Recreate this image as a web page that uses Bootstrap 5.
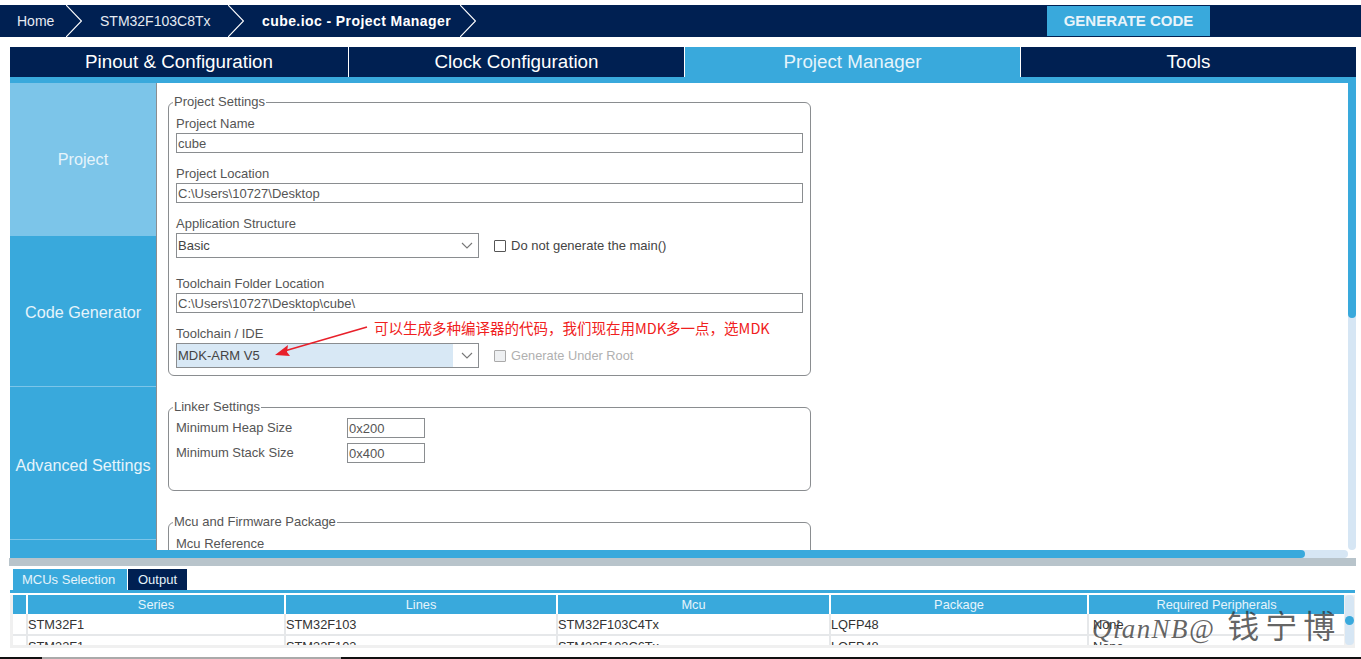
<!DOCTYPE html>
<html lang="zh-CN">
<head>
  <meta charset="UTF-8" />
  <title>cube.ioc - Project Manager</title>
  <link rel="stylesheet" href="https://cdn.jsdelivr.net/npm/bootstrap@5.3.0/dist/css/bootstrap.min.css" />
  <style>
    html, body { height: 659px; overflow: hidden; }
    body {
      background: #fff;
      color: #444;
      font-family: "Liberation Sans", Arial, sans-serif;
      font-size: 13px;
      position: relative;
    }
    /* top bar */
    .crumbbar { margin-top: 5px; height: 32px; background: #002052; color: #fff; }
    .crumb { font-size: 14px; height: 32px; line-height: 32px; color: #e6ebf2; }
    .crumb-home { width: 66px; padding-left: 17px; }
    .crumb-mcu { width: 146px; padding-left: 18px; }
    .crumb-cur { padding-left: 18px; width: 216px; font-weight: 700; color: #fff; letter-spacing: .42px; white-space: nowrap; }
    .crumbbar svg { flex: none; }
    .gen-btn {
      margin: 1px 0 0 571px; width: 163px; height: 30px; padding: 0; border: 0; border-radius: 0;
      background: #39a9dc; color: #e9f4fa; font-size: 15px; font-weight: 700; line-height: 30px;
    }
    .gen-btn:hover { background: #39a9dc; color: #e9f4fa; }
    /* main tabs */
    .maintabs { margin: 10px 5px 0 10px; height: 30px; background: #002052; }
    .maintab { color: #fff; font-size: 18.8px; line-height: 30px; text-align: center; border-left: 1px solid #fff; width: 336px; }
    .maintab:first-child { border-left: 0; width: 338px; }
    .maintab.sel { background: #39a9dc; color: #e6f4fb; }
    .tabstrip { margin: 0 5px 0 10px; height: 6px; background: #39a9dc; }
    /* project manager area */
    .pm { margin-left: 10px; margin-right: 5px; height: 467px; overflow: hidden; position: relative; }
    .sidemenu { width: 146px; flex: none; background: #39a9dc; }
    .sideitem {
      height: 153px; padding-top: 4px; color: #e6f4fb; font-size: 16.2px; border-bottom: 1px solid #7cc5e9;
      display: flex; align-items: center; justify-content: center;
    }
    .sideitem.sel { background: #7cc5e9; border-bottom: 0; padding-top: 0; }
    .sideitem.second { height: 151px; padding-top: 2px; }
    .pm-body { flex: 1; border-left: 1px solid #8a8d90; margin-right: 8px; padding: 12px 0 0 11px; overflow: hidden; height: 467px; }
    .pmset {
      width: 643px; margin: 0 0 24px 0; padding: 0 7px 0 7px;
      border: 1px solid #8a8d90; border-radius: 6px; position: relative;
    }
    .pmset legend {
      float: none; width: auto; margin: 0 0 7px -3px; padding: 0 1px; font-size: 13px; line-height: 14px;
      color: #555;
    }
    .pmlabel { display: block; margin: 0; font-size: 13px; line-height: 15px; color: #555; }
    .pmfield.form-control {
      height: 20px; width: 627px; padding: 0 1px; border: 1px solid #8a8d90; border-radius: 0;
      font-size: 13px; line-height: 18px; color: #555; box-shadow: none; margin: 2px 0 0 0;
      background: #fff;
    }
    .pmselect.form-select {
      height: 25px; width: 303px; padding: 0 0 0 1px; border: 1px solid #8a8d90; border-radius: 0;
      font-size: 13px; color: #444; box-shadow: none;
      background: url("data:image/svg+xml,%3Csvg xmlns='http://www.w3.org/2000/svg' width='12' height='7'%3E%3Cpath d='M1 1l5 5 5-5' fill='none' stroke='%23777' stroke-width='1.1'/%3E%3C/svg%3E") no-repeat right 5px center, #fff;
    }
    .pmselect.form-select.hl {
      background: url("data:image/svg+xml,%3Csvg xmlns='http://www.w3.org/2000/svg' width='12' height='7'%3E%3Cpath d='M1 1l5 5 5-5' fill='none' stroke='%23777' stroke-width='1.1'/%3E%3C/svg%3E") no-repeat right 5px center,
        linear-gradient(to right, #d8e8f5 276px, #fff 276px);
    }
    .pmcheck { display: flex; align-items: center; gap: 5px; margin-left: 15px; font-size: 13px; color: #444; }
    .pmcheck .form-check-input {
      width: 12px; height: 12px; margin: 0; border: 1px solid #555; border-radius: 1px; flex: none; float: none;
    }
    .pmcheck.off { color: #b0b0b0; font-size: 12.8px; }
    .pmcheck.off .form-check-input { border-color: #aaa; background: #eef0f2; opacity: 1; }
    .note-red {
      position: absolute; left: 205px; top: 203px; color: #f02020; font-size: 14.5px; line-height: 18px; white-space: nowrap;
      font-family: "Noto Sans CJK SC", "Liberation Sans", sans-serif;
    }
    .note-arrow { position: absolute; left: 100px; top: 209px; }
    .hexfield.form-control {
      width: 78px; height: 20px; padding: 0 1px; border: 1px solid #8a8d90; border-radius: 0;
      font-size: 13px; color: #555; box-shadow: none; margin-left: 0;
    }
    .hexlabel { width: 171px; font-size: 13px; color: #555; margin: 0; }
    /* scrollbars */
    .vscroll { position: absolute; right: 0; top: 0; width: 8px; height: 467px; background: #d6e6f4; border-radius: 4px; }
    .vthumb { height: 235px; background: #39a9dc; border-radius: 0 0 4px 4px; }
    .hscroll { margin: 0 13px 0 10px; height: 8px; background: #d6e6f4; border-radius: 0 4px 4px 0; }
    .hthumb { width: 1295px; height: 8px; background: #39a9dc; border-radius: 0 4px 4px 0; }
    .splitbar { margin: 0 5px 0 9px; height: 8px; background: #b8c4cb; }
    /* bottom panel */
    .lowertabs { margin: 3px 0 0 13px; height: 21px; gap: 1px; }
    .lowertab { font-size: 13px; line-height: 21px; width: 114px; padding-left: 9px; color: #e6f4fb; background: #39a9dc; white-space: nowrap; }
    .lowertab.dark { background: #002052; width: 59px; padding-left: 10px; }
    .lowerline { margin: 0 6px 0 10px; height: 3px; background: #39a9dc; }
    .gridwrap { margin: 2px 6px 0 10px; height: 50px; background: #f0f0f0; position: relative; overflow: hidden; }
    .mcu-table { table-layout: fixed; width: 1331px; margin: 0 0 0 3px; border-collapse: separate; border-spacing: 0; background: #fff; }
    .mcu-table th {
      background: #39a9dc; color: #e6f4fb; font-weight: 400; font-size: 12.8px; line-height: 18px; height: 19px; padding: 1px 0 0 0;
      text-align: center; border: 0; border-left: 2px solid #fff;
    }
    .mcu-table th:first-child { border-left: 0; }
    .mcu-table td {
      font-size: 12.8px; line-height: 19px; height: 20px; padding: 1px 0 0 0; color: #333; background: #fff;
      border: 0; border-left: 2px solid #e6e8ea; border-bottom: 2px solid #e6e8ea; white-space: nowrap; overflow: hidden;
    }
    .mcu-table td:first-child { border-left: 0; }
    .mcu-table td:last-child { padding-left: 4px; }
    .gridbar { position: absolute; right: 1px; top: 0; width: 9px; height: 50px; background: #d6e6f4; border-radius: 4px; }
    .griddot { position: absolute; left: 0; top: 21px; width: 9px; height: 9px; border-radius: 50%; background: #39a9dc; }
    .gridfoot { position: absolute; left: 10px; right: 6px; top: 645px; height: 3px; background: #f0f0f0; }
    .sign {
      position: absolute; left: 1092px; top: 604px; color: rgba(50,50,50,.75); font-size: 27px; line-height: 40px;
      font-family: "Liberation Serif", "Noto Sans CJK SC", serif; font-style: italic; letter-spacing: 1.4px; white-space: nowrap;
    }
    .sign b { font-weight: 400; font-size: 32px; font-style: normal; letter-spacing: 6px; font-family: "Noto Sans CJK SC", serif; margin-left: 12px; }
    .taskline { position: absolute; left: 0; right: 0; top: 657px; height: 2px; background: #111; }
    .taskline i { position: absolute; left: 42px; width: 299px; top: 0; height: 2px; background: #aaa; }
  </style>
</head>
<body>
  <!-- breadcrumb bar -->
  <div class="crumbbar d-flex">
    <div class="crumb crumb-home">Home</div>
    <svg width="16" height="32"><path d="M0 0l15.5 16L0 32" fill="none" stroke="#fff" stroke-width="1.2"/></svg>
    <div class="crumb crumb-mcu">STM32F103C8Tx</div>
    <svg width="16" height="32"><path d="M0 0l15.5 16L0 32" fill="none" stroke="#fff" stroke-width="1.2"/></svg>
    <div class="crumb crumb-cur">cube.ioc - Project Manager</div>
    <svg width="16" height="32"><path d="M0 0l15.5 16L0 32" fill="none" stroke="#fff" stroke-width="1.2"/></svg>
    <button class="btn gen-btn" type="button">GENERATE CODE</button>
  </div>

  <!-- main tabs -->
  <div class="d-flex maintabs">
    <div class="maintab">Pinout &amp; Configuration</div>
    <div class="maintab">Clock Configuration</div>
    <div class="maintab sel">Project Manager</div>
    <div class="maintab">Tools</div>
  </div>
  <div class="tabstrip"></div>

  <div class="pm d-flex">
    <div class="sidemenu">
      <div class="sideitem sel">Project</div>
      <div class="sideitem second">Code Generator</div>
      <div class="sideitem">Advanced Settings</div>
    </div>
    <div class="pm-body">
      <fieldset class="pmset" style="height:281px">
        <legend>Project Settings</legend>
        <label class="pmlabel mt-0">Project Name</label>
        <input class="form-control pmfield" value="cube" />
        <label class="pmlabel" style="margin-top:13px">Project Location</label>
        <input class="form-control pmfield" value="C:\Users\10727\Desktop" />
        <label class="pmlabel" style="margin-top:13px">Application Structure</label>
        <div class="d-flex align-items-center" style="margin-top:2px">
          <select class="form-select pmselect"><option>Basic</option></select>
          <label class="pmcheck"><input class="form-check-input" type="checkbox" />Do not generate the main()</label>
        </div>
        <label class="pmlabel" style="margin-top:18px">Toolchain Folder Location</label>
        <input class="form-control pmfield" value="C:\Users\10727\Desktop\cube\" />
        <label class="pmlabel" style="margin-top:13px">Toolchain / IDE</label>
        <div class="d-flex align-items-center" style="margin-top:2px">
          <select class="form-select pmselect hl"><option>MDK-ARM V5</option></select>
          <label class="pmcheck off"><input class="form-check-input" type="checkbox" disabled />Generate Under Root</label>
        </div>
        <div class="note-red">可以生成多种编译器的代码，我们现在用MDK多一点，选MDK</div>
        <svg class="note-arrow" width="104" height="36">
          <path d="M98 2L12 27" stroke="#e8202a" stroke-width="1.6" fill="none"/>
          <path d="M6 30l13-10-1 7 3 4z" fill="#e8202a"/>
        </svg>
      </fieldset>

      <fieldset class="pmset" style="height:91px">
        <legend>Linker Settings</legend>
        <div class="d-flex align-items-center" style="margin-top:-3px">
          <label class="hexlabel">Minimum Heap Size</label>
          <input class="form-control hexfield" value="0x200" />
        </div>
        <div class="d-flex align-items-center" style="margin-top:5px">
          <label class="hexlabel">Minimum Stack Size</label>
          <input class="form-control hexfield" value="0x400" />
        </div>
      </fieldset>

      <fieldset class="pmset" style="height:60px">
        <legend>Mcu and Firmware Package</legend>
        <label class="pmlabel">Mcu Reference</label>
      </fieldset>
    </div>
    <div class="vscroll"><div class="vthumb"></div></div>
  </div>
  <div class="hscroll"><div class="hthumb"></div></div>
  <div class="splitbar"></div>

  <!-- MCU list -->
  <div class="lowertabs d-flex">
    <div class="lowertab">MCUs Selection</div>
    <div class="lowertab dark">Output</div>
  </div>
  <div class="lowerline"></div>
  <div class="gridwrap">
    <table class="table mcu-table">
      <colgroup>
        <col style="width:13px" /><col style="width:258px" /><col style="width:272px" />
        <col style="width:273px" /><col style="width:258px" /><col style="width:257px" />
      </colgroup>
      <thead>
        <tr><th></th><th>Series</th><th>Lines</th><th>Mcu</th><th>Package</th><th>Required Peripherals</th></tr>
      </thead>
      <tbody>
        <tr><td></td><td>STM32F1</td><td>STM32F103</td><td>STM32F103C4Tx</td><td>LQFP48</td><td>None</td></tr>
        <tr><td></td><td>STM32F1</td><td>STM32F103</td><td>STM32F103C6Tx</td><td>LQFP48</td><td>None</td></tr>
      </tbody>
    </table>
    <div class="gridbar"><div class="griddot"></div></div>
  </div>
  <div class="gridfoot"></div>
  <div class="sign">QianNB@<b>钱宁博</b></div>
  <div class="taskline"><i></i></div>

  <script src="https://cdn.jsdelivr.net/npm/bootstrap@5.3.0/dist/js/bootstrap.bundle.min.js"></script>
</body>
</html>
